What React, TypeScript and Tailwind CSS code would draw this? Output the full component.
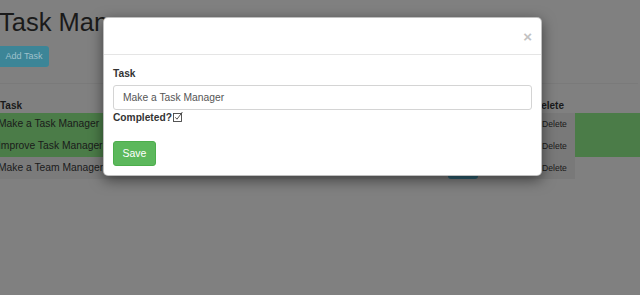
import React from 'react';

const tasks = [
  { name: 'Make a Task Manager', done: true },
  { name: 'Improve Task Manager', done: true },
  { name: 'Make a Team Manager', done: false },
];

function CheckGlyph() {
  return (
    <svg width="10" height="11" viewBox="0 0 10 11" className="ml-[1px] mb-[3px]">
      <rect x="0.5" y="2.5" width="8" height="8" fill="none" stroke="#444" strokeWidth="0.9" />
      <path d="M2.3 6.3 L4 8.2 L9.4 1" fill="none" stroke="#444" strokeWidth="0.9" />
    </svg>
  );
}

export default function App() {
  return (
    <div className="relative w-[640px] h-[295px] overflow-hidden bg-[#808080] font-['Liberation_Sans',Arial,sans-serif] text-[#1a1a1a]">
      {/* Page behind the backdrop */}
      <div className="flex flex-col ml-[-2px]">
        <h1 className="mt-[7px] ml-[1px] text-[25.5px] leading-[30px] font-normal">Task Manager</h1>
        <button className="mt-[9px] w-[51px] h-[21px] rounded-[3px] bg-[#3c8597] text-[9px] text-[#9fc1cc] pl-[1px]">
          Add Task
        </button>
        <div className="mt-[16px] h-px w-[640px] bg-[#7a7a7a]" />

        {/* Table */}
        <div className="mt-[14px] flex h-[15px] items-center text-[10px] font-bold leading-[14px]">
          <div className="w-[450px] pl-[2px]">Task</div>
          <div className="w-[86px]" />
          <div className="w-[40px]">Delete</div>
        </div>
        {tasks.map((t, i) => (
          <div key={t.name} className="flex h-[22px] text-[10.3px] leading-[14px]">
            <div className={`flex w-[539px] items-center ${t.done ? 'bg-[#4b7c48]' : 'bg-[#7b7b7b]'}`}>
              <div className="w-[450px]">{t.name}</div>
              <div className={`w-[30px] rounded-[3px] bg-[#2e6070] ${i === 2 ? 'h-[20px] mt-[2px]' : 'h-[17px]'}`} />
            </div>
            <div className="flex w-[38px] items-center bg-[#797979] pl-[5px] text-[8.6px]">Delete</div>
            <div className={`w-[65px] ${t.done ? 'bg-[#4b7c48]' : ''}`} />
          </div>
        ))}
      </div>

      {/* Modal */}
      <div className="absolute left-[103px] top-[17px] w-[439px] h-[159px] rounded-[5px] border border-[rgba(0,0,0,0.25)] bg-white shadow-[0_4px_14px_rgba(0,0,0,0.5)] flex flex-col">
        <div className="flex h-[37px] shrink-0 items-center justify-end border-b border-[#e5e5e5] pr-[9px]">
          <span className="text-[15px] font-bold leading-none text-[#c2c2c2] mt-[1px]">×</span>
        </div>
        <div className="flex flex-col px-[9px] pt-[12px] text-[#333]">
          <label className="text-[10.2px] font-bold leading-[14px]">Task</label>
          <div className="mt-[4px] flex h-[25px] items-center rounded-[3px] border border-[#d4d4d4] pl-[9px] text-[10.3px] text-[#555]">
            Make a Task Manager
          </div>
          <div className="mt-[1px] flex items-end text-[10.2px] font-bold leading-[14px]">
            Completed?
            <CheckGlyph />
          </div>
          <button className="mt-[16px] w-[43px] h-[25px] rounded-[3px] border border-[#4cae4c] bg-[#5cb85c] text-[10.5px] text-white">
            Save
          </button>
        </div>
      </div>
    </div>
  );
}
